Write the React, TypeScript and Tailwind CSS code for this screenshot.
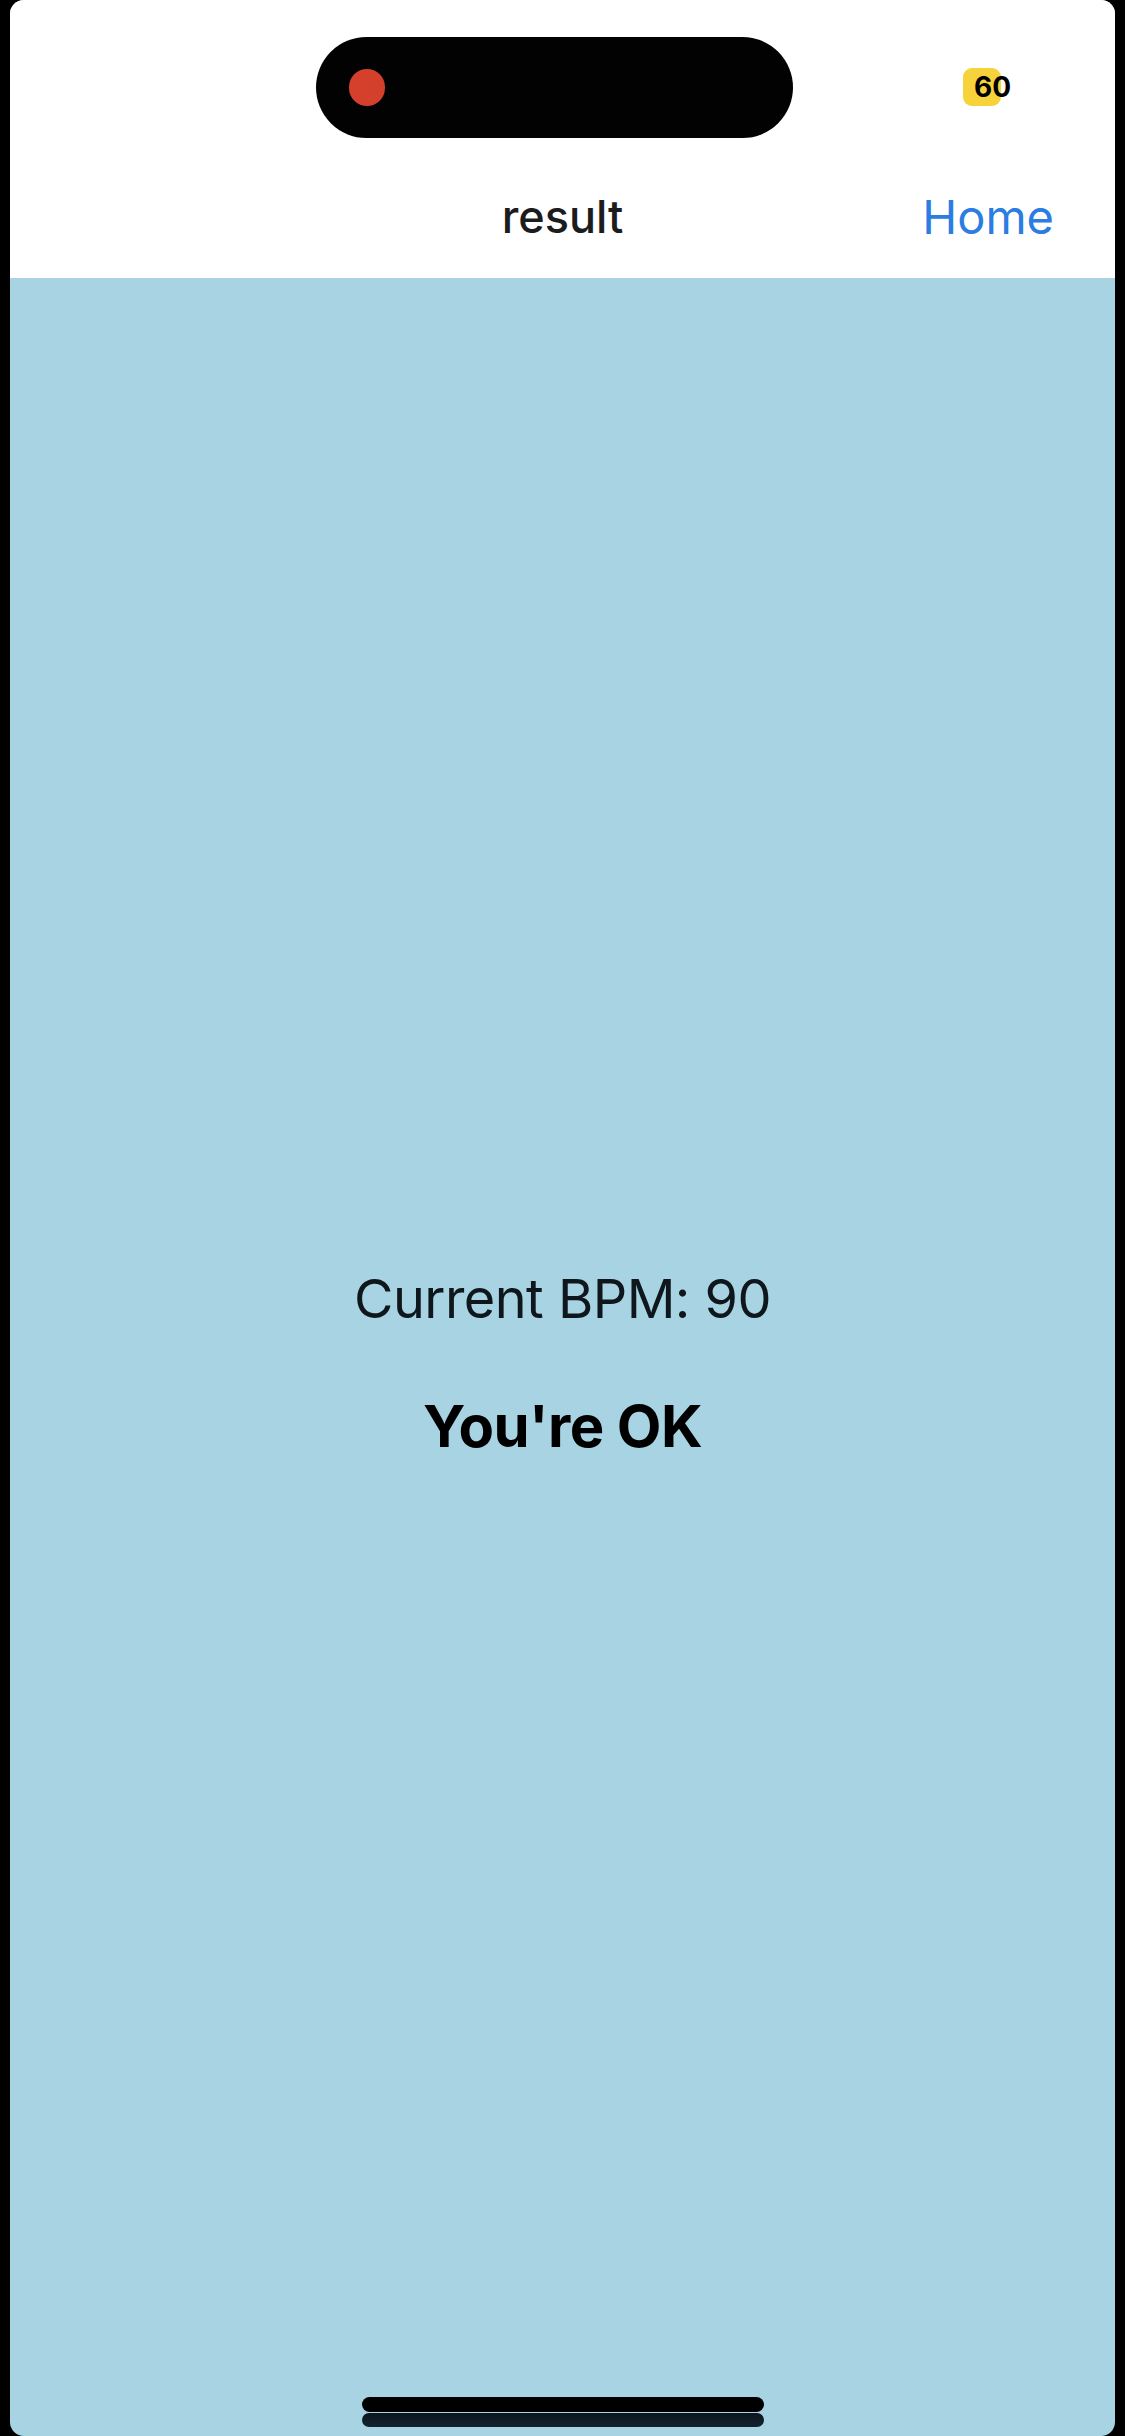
export default function App() {
  return (
    <div className="w-[1125px] h-[2436px] bg-black px-[10px] flex" style={{ fontFamily: 'Inter, "Noto Sans", sans-serif' }}>
      <div className="flex-1 flex flex-col rounded-[14px] overflow-hidden bg-[#a7d3e3]">
        {/* status bar + nav */}
        <div className="bg-white h-[278px] flex flex-col">
          <div className="h-[170px] relative">
            <div className="absolute left-[306px] top-[37px] w-[477px] h-[101px] rounded-full bg-[#020203] flex items-center pl-[33px]">
              <div className="w-[36px] h-[37px] rounded-full bg-[#d4402c]"></div>
            </div>
            <div className="absolute left-[953px] top-[68px] flex items-center">
              <div className="w-[38px] h-[38px] rounded-[9px] bg-[#f6d23b]"></div>
              <span className="absolute left-[11px] top-[1px] text-[28px] leading-[37px] font-bold text-black">60</span>
            </div>
          </div>
          <div className="relative h-[108px] flex items-start justify-center">
            <span className="text-[45px] leading-[56px] font-medium text-[#1c1c1e] mt-[19px]">result</span>
            <span className="absolute right-[61px] top-[17px] text-[47px] leading-[60px] text-[#2b7de1]">Home</span>
          </div>
        </div>
        {/* body */}
        <div className="flex-1 flex flex-col items-center relative">
          <div className="mt-[989px] flex flex-col items-center text-[#0f171c]">
            <span className="text-[54px] leading-[64px] tracking-[-0.01em]">Current BPM: 90</span>
            <span className="mt-[63px] text-[58px] leading-[64px] font-bold tracking-[-0.01em] text-black">You're OK</span>
          </div>
          <div className="absolute bottom-[9px] left-1/2 -translate-x-1/2 flex flex-col items-center gap-[1px]">
            <div className="w-[402px] h-[15px] rounded-full bg-black"></div>
            <div className="w-[402px] h-[14px] rounded-full bg-gradient-to-b from-[#050c14] to-[#0a1a26] opacity-95"></div>
          </div>
        </div>
      </div>
    </div>
  )
}
